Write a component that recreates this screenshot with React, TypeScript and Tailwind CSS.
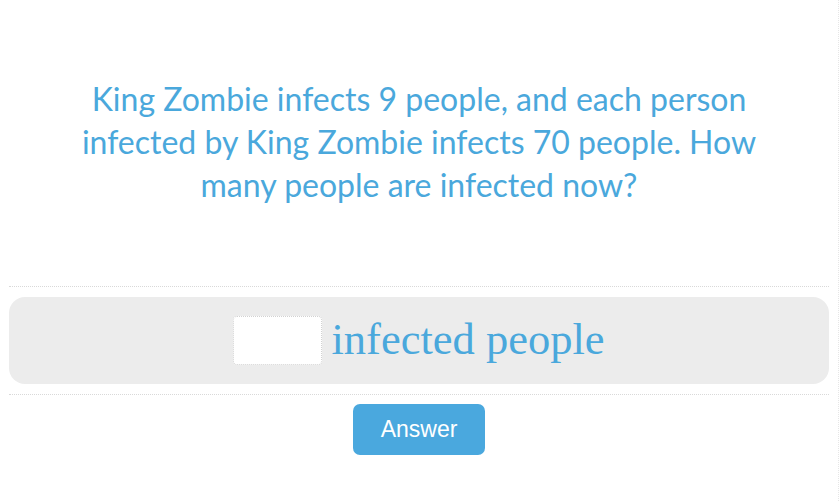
export default function App() {
  return (
    <div className="w-[839px] min-h-[501px] border-r border-dotted border-[#e6e6e6] bg-white px-[9px]">
      {/* question */}
      <div className="pt-[77px] pb-[80px]">
        <p className="mx-auto max-w-[700px] text-center font-['Lato',sans-serif] text-[32px] leading-[43px] text-[#4aa8dc]">
          King Zombie infects 9 people, and each person infected by King Zombie infects 70 people. How many people are infected now?
        </p>
      </div>

      <div className="border-t border-dotted border-[#d9d9d9]" />

      {/* answer row */}
      <div className="mt-[10px] flex h-[87px] items-center justify-center gap-[9px] rounded-[16px] bg-[#ececec]">
        <input
          type="text"
          className="h-[49px] w-[89px] rounded-[4px] border border-dotted border-[#d2d2d2] bg-white outline-none"
        />
        <span className="font-['Liberation_Serif',serif] text-[44.5px] leading-none text-[#4aa8dc] -mt-[3px]">
          infected people
        </span>
      </div>

      <div className="mt-[10px] border-t border-dotted border-[#d9d9d9]" />

      <div className="mt-[9px] flex justify-center">
        <button className="h-[51px] w-[132px] rounded-[7px] bg-[#4aa8de] font-['Liberation_Sans',Arial,sans-serif] text-[23px] text-white">
          Answer
        </button>
      </div>
    </div>
  );
}
